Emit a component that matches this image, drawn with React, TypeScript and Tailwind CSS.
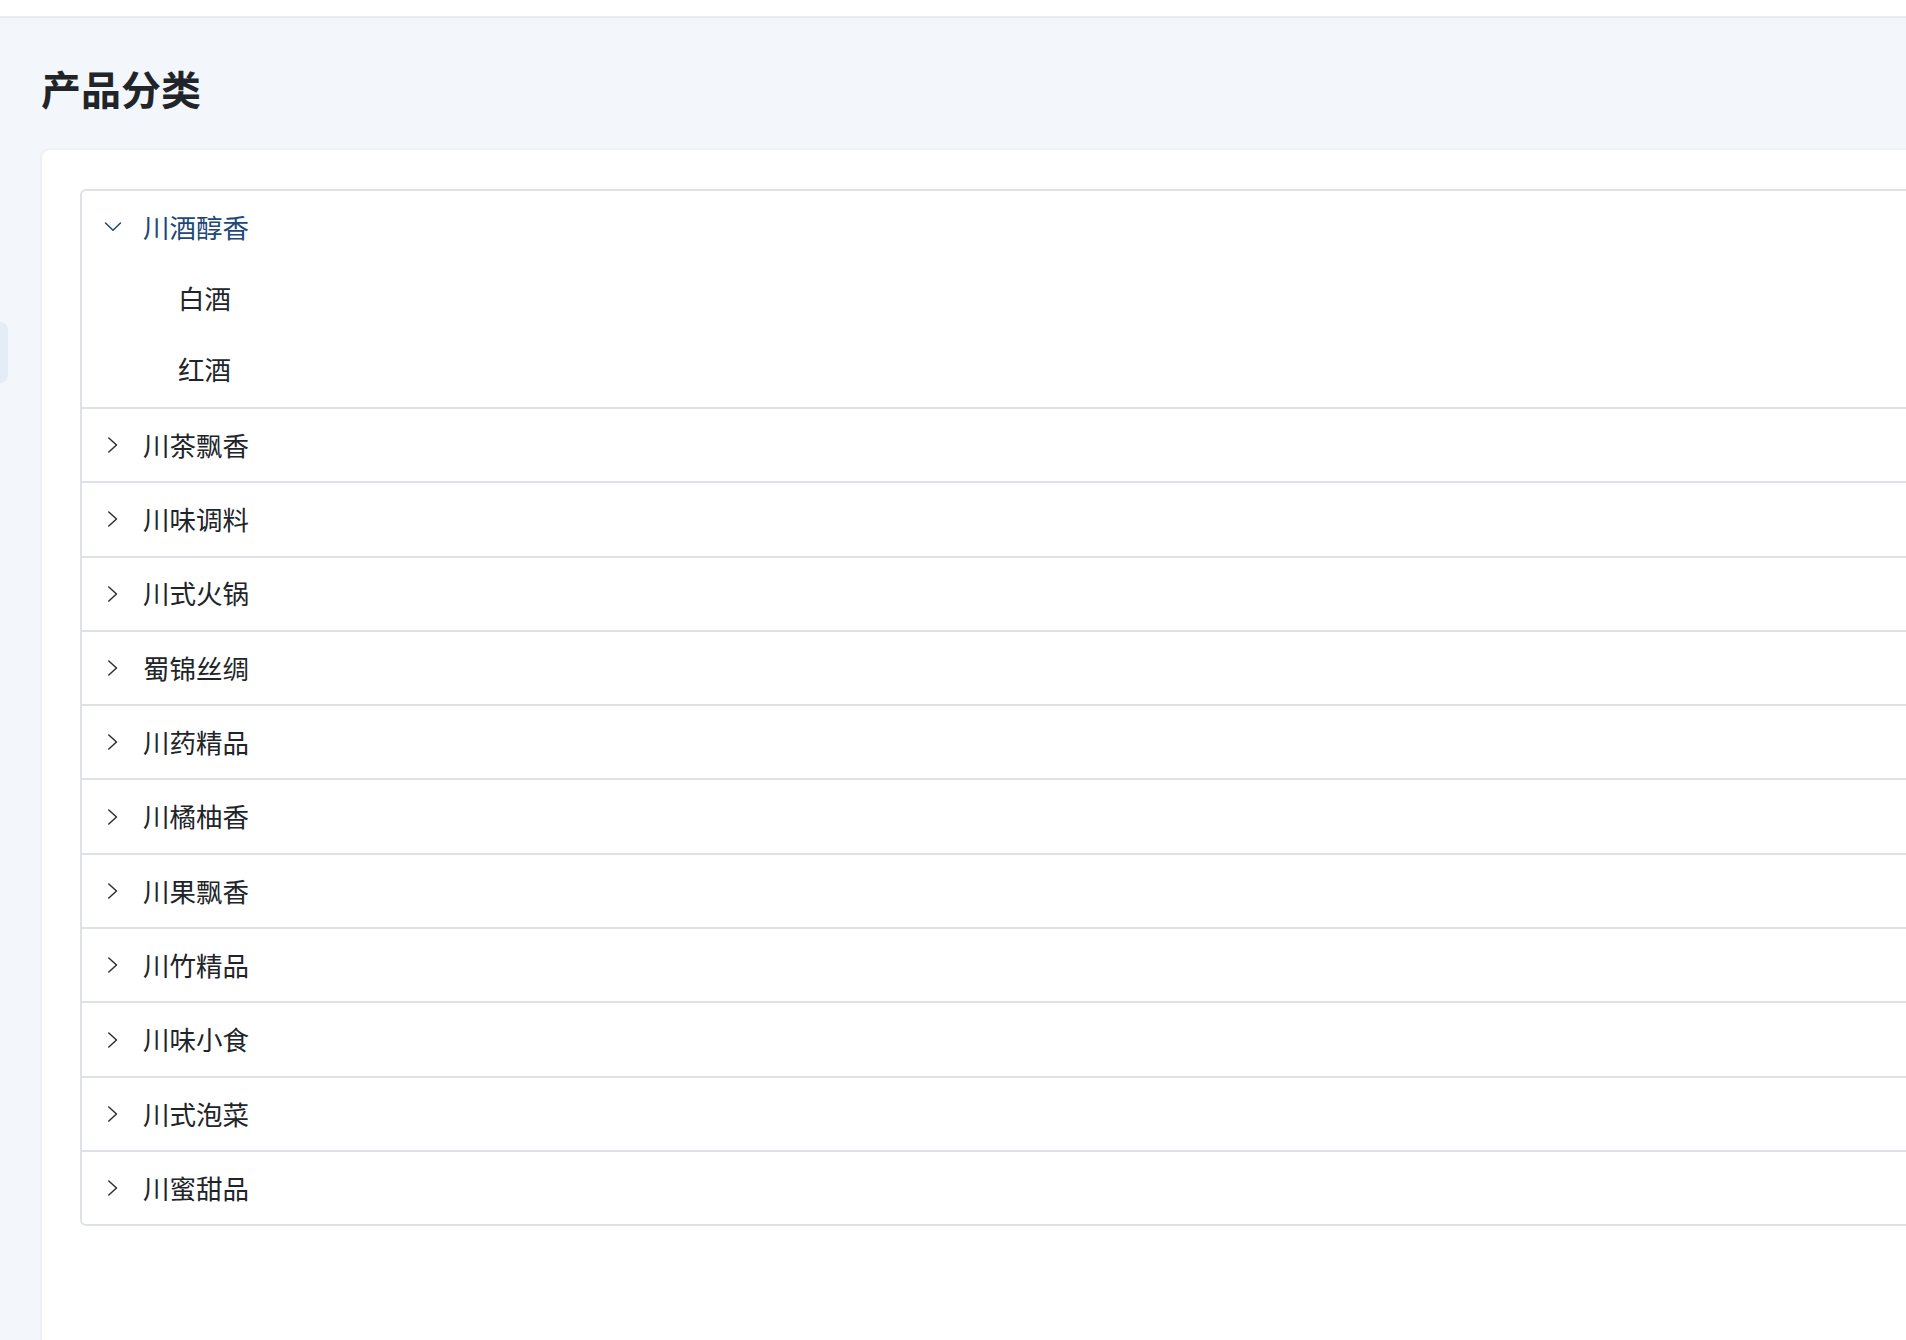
import React from "react";

const items = [
  "川茶飘香",
  "川味调料",
  "川式火锅",
  "蜀锦丝绸",
  "川药精品",
  "川橘柚香",
  "川果飘香",
  "川竹精品",
  "川味小食",
  "川式泡菜",
  "川蜜甜品",
];

function ChevronRight() {
  return (
    <svg width="18" height="18" viewBox="0 0 18 18" fill="none" className="shrink-0">
      <path d="M4.8 2 L12.5 9 L4.8 16" stroke="#2b2f33" strokeWidth="1.5" strokeLinecap="round" strokeLinejoin="round" />
    </svg>
  );
}

function ChevronDown() {
  return (
    <svg width="18" height="18" viewBox="0 0 18 18" fill="none" className="shrink-0">
      <path d="M1.5 5 L9 12.2 L16.5 5" stroke="#1d4877" strokeWidth="1.5" strokeLinecap="round" strokeLinejoin="round" />
    </svg>
  );
}

export default function App() {
  return (
    <div className="relative w-[1906px] h-[1340px] overflow-hidden bg-[#f3f7fb] font-['Noto_Sans_CJK_SC','Noto_Sans',sans-serif] text-[#212529]">
      <div className="h-[18px] bg-white border-b-2 border-[#e9ebee]" />
      <div className="absolute left-0 top-[322px] w-[8px] h-[61px] rounded-r-[10px] bg-[#e3edf8]" />
      <div className="pl-[41px] pt-[48px] pb-[38px]">
        <h1 className="text-[40px] leading-[44px] font-bold text-[#212529]">产品分类</h1>
      </div>
      <div className="ml-[40px] w-[1960px] h-[1300px] bg-white border-2 border-[#edf0f4] rounded-[10px] pt-[39px] pl-[38px]">
        <div className="w-[1950px] border-2 border-[#dee2e6] rounded-[6px]">
          <div className="pb-[2px]">
            <div className="h-[72px] flex items-center pl-[22px]">
              <ChevronDown />
              <span className="ml-[21px] text-[26.5px] leading-none text-[#1d4877]">川酒醇香</span>
            </div>
            <div>
              <div className="h-[71px] flex items-center pl-[96px] text-[26.5px] leading-none">白酒</div>
              <div className="h-[71px] flex items-center pl-[96px] text-[26.5px] leading-none">红酒</div>
            </div>
          </div>
          {items.map((t) => (
            <div key={t} className="border-t-2 border-[#dee2e6]">
              <div className="h-[72.3px] flex items-center pl-[22px]">
                <ChevronRight />
                <span className="ml-[21px] text-[26.5px] leading-none text-[#212529]">{t}</span>
              </div>
            </div>
          ))}
        </div>
      </div>
    </div>
  );
}
